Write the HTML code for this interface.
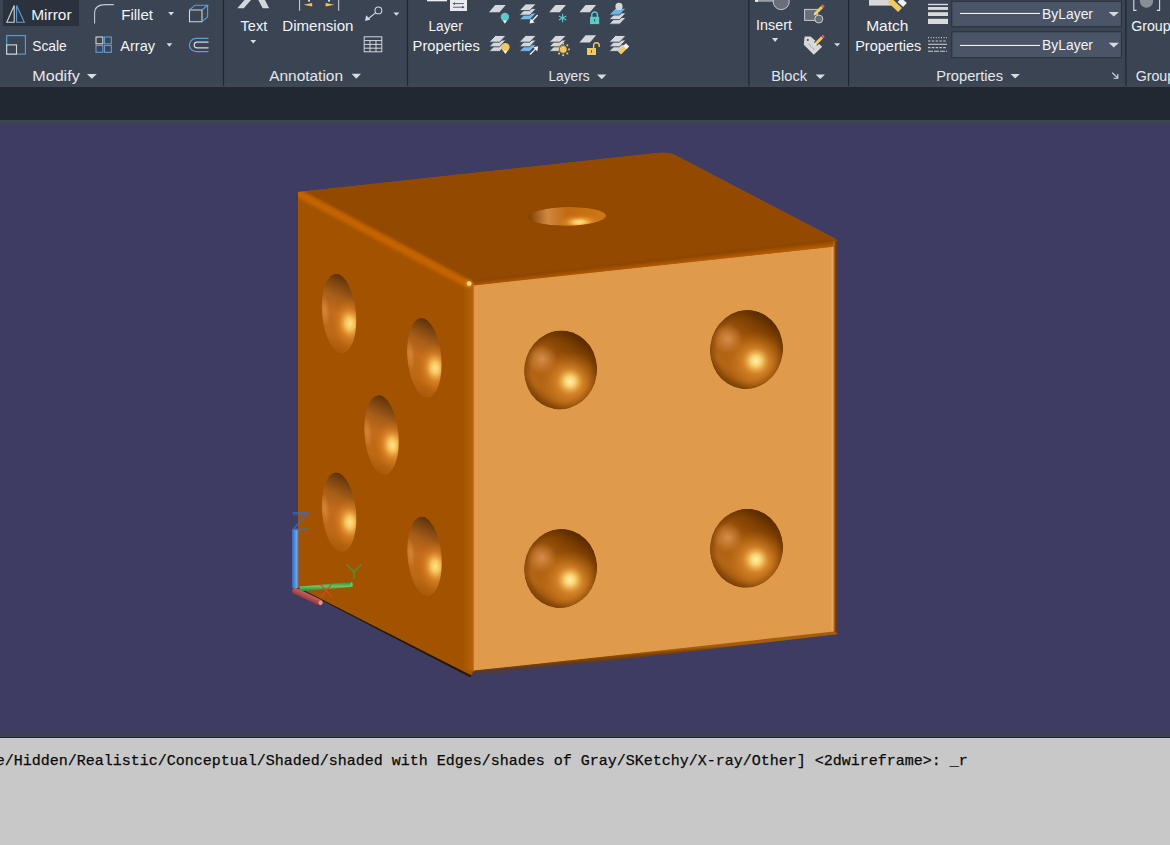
<!DOCTYPE html>
<html><head><meta charset="utf-8">
<style>
html,body{margin:0;padding:0;width:1170px;height:845px;overflow:hidden;background:#3e3c62;}
body{position:relative;font-family:"Liberation Sans",sans-serif;}
.band{position:absolute;left:0;width:1170px;}
svg{position:absolute;left:0;top:0;}
</style></head>
<body>
<div class="band" style="top:0;height:87px;background:#3b4453"></div>
<div class="band" style="top:83px;height:4px;background:#3f4755"></div>
<div class="band" style="top:87px;height:33px;background:#222831"></div>
<div class="band" style="top:120px;height:6px;background:linear-gradient(#3d4550,#3d4550 40%,#3e3c62)"></div>
<div class="band" style="top:733px;height:4px;background:#3c4050"></div>
<div class="band" style="top:737px;height:1px;background:#20242c"></div>
<div class="band" style="top:738px;height:107px;background:#c8c8c8"></div>
<div style="position:absolute;left:-4.3px;top:752px;font-family:'Liberation Mono',monospace;font-size:15px;line-height:20px;color:#0a0a0a;white-space:pre;-webkit-text-stroke:0.25px #0a0a0a;">e/Hidden/Realistic/Conceptual/Shaded/shaded with Edges/shades of Gray/SKetchy/X-ray/Other] &lt;2dwireframe&gt;: _r</div>
<svg width="1170" height="845" viewBox="0 0 1170 845">

<defs>
  <clipPath id="clipHole"><ellipse rx="17" ry="40"/></clipPath>
  <clipPath id="clipSph"><ellipse rx="36.5" ry="39.6"/></clipPath>
  <linearGradient id="hole" x1="0.62" y1="0" x2="0.38" y2="1">
    <stop offset="0" stop-color="#5a2e08"/>
    <stop offset="0.1" stop-color="#74400e"/>
    <stop offset="0.3" stop-color="#a85e18"/>
    <stop offset="0.5" stop-color="#c26c1c"/>
    <stop offset="0.8" stop-color="#bc6814"/>
    <stop offset="1" stop-color="#a65808"/>
  </linearGradient>
  <radialGradient id="holeSoft" cx="0.5" cy="0.5" r="0.5">
    <stop offset="0" stop-color="#dc9048" stop-opacity="0.7"/>
    <stop offset="1" stop-color="#dc9048" stop-opacity="0"/>
  </radialGradient>
  <radialGradient id="holeHi" cx="0.5" cy="0.5" r="0.5">
    <stop offset="0" stop-color="#ffe888" stop-opacity="1"/>
    <stop offset="0.25" stop-color="#fcc860" stop-opacity="0.92"/>
    <stop offset="0.6" stop-color="#e89030" stop-opacity="0.45"/>
    <stop offset="1" stop-color="#d07010" stop-opacity="0"/>
  </radialGradient>
  <linearGradient id="topHole" x1="0" y1="0" x2="1" y2="0">
    <stop offset="0" stop-color="#7a3e00"/>
    <stop offset="0.12" stop-color="#a86020"/>
    <stop offset="0.25" stop-color="#d08840"/>
    <stop offset="0.5" stop-color="#c06a10"/>
    <stop offset="1" stop-color="#cc7818"/>
  </linearGradient>
  <linearGradient id="sphBase" x1="0.75" y1="0" x2="0.3" y2="1">
    <stop offset="0" stop-color="#482000"/>
    <stop offset="0.2" stop-color="#7c3e00"/>
    <stop offset="0.5" stop-color="#ac5e10"/>
    <stop offset="0.8" stop-color="#b46616"/>
    <stop offset="1" stop-color="#8a4806"/>
  </linearGradient>
  <radialGradient id="sphEdge" cx="0.5" cy="0.5" r="0.5">
    <stop offset="0.8" stop-color="#603000" stop-opacity="0"/>
    <stop offset="1" stop-color="#603000" stop-opacity="0.5"/>
  </radialGradient>
  <radialGradient id="sphHi" cx="0.5" cy="0.5" r="0.5">
    <stop offset="0" stop-color="#fff4b0" stop-opacity="1"/>
    <stop offset="0.18" stop-color="#fdd472" stop-opacity="0.95"/>
    <stop offset="0.45" stop-color="#eb9835" stop-opacity="0.55"/>
    <stop offset="1" stop-color="#c87010" stop-opacity="0"/>
  </radialGradient>
  <radialGradient id="sphSoft" cx="0.5" cy="0.5" r="0.5">
    <stop offset="0" stop-color="#e6a060" stop-opacity="0.7"/>
    <stop offset="0.5" stop-color="#e6a060" stop-opacity="0.35"/>
    <stop offset="1" stop-color="#e6a060" stop-opacity="0"/>
  </radialGradient>
  <linearGradient id="bevTop" gradientUnits="userSpaceOnUse" x1="650" y1="258.2" x2="650.95" y2="266.6">
    <stop offset="0" stop-color="#934900"/>
    <stop offset="0.35" stop-color="#8e4600"/>
    <stop offset="1" stop-color="#b65d00"/>
  </linearGradient>
  <linearGradient id="bevFront" x1="0" y1="0" x2="1" y2="0">
    <stop offset="0" stop-color="#a35300"/>
    <stop offset="0.2" stop-color="#a85800"/>
    <stop offset="0.85" stop-color="#b46008"/>
    <stop offset="1" stop-color="#c87a30"/>
  </linearGradient>
  <linearGradient id="bevRight" x1="0" y1="0" x2="1" y2="0">
    <stop offset="0" stop-color="#c07030"/>
    <stop offset="0.4" stop-color="#7a4010"/>
    <stop offset="0.7" stop-color="#5a3a28"/>
    <stop offset="1" stop-color="#3e3c62"/>
  </linearGradient>
  <linearGradient id="bevBot" gradientUnits="userSpaceOnUse" x1="650" y1="651.6" x2="650.5" y2="657.6">
    <stop offset="0" stop-color="#a65c0c"/>
    <stop offset="0.35" stop-color="#864600"/>
    <stop offset="0.75" stop-color="#6a3c18"/>
    <stop offset="1" stop-color="#4a3a48"/>
  </linearGradient>
  <filter id="blur05" x="-20%" y="-20%" width="140%" height="140%"><feGaussianBlur stdDeviation="0.5"/></filter>
  <filter id="blur07" x="-20%" y="-20%" width="140%" height="140%"><feGaussianBlur stdDeviation="0.7"/></filter>
  <filter id="blur18" x="-20%" y="-20%" width="140%" height="140%"><feGaussianBlur stdDeviation="1.8"/></filter>
  <filter id="blur2" x="-20%" y="-20%" width="140%" height="140%"><feGaussianBlur stdDeviation="2"/></filter>
  <filter id="blur1" x="-50%" y="-50%" width="200%" height="200%"><feGaussianBlur stdDeviation="1"/></filter>
  <clipPath id="clipDie"><path d="M298,192 L655,153.2 Q664,151.8 673,154 L835,238.6 Q838.5,240 838.5,243 L838.5,634 L470,677.5 L298,588 Z"/></clipPath>
  <clipPath id="clipTopHole"><ellipse rx="39" ry="9.4"/></clipPath>
  <clipPath id="clipLeft"><polygon points="298,192 470,284 470,675 298,587"/></clipPath>
</defs>


<!-- die faces -->
<path d="M298,192 L655,153.2 Q664,151.8 673,154 L835,238.6 Q837.5,240 837.5,243 L837.5,634 L470,675.5 L298,587.5 Z" fill="#a35300"/>
<polygon points="298,192 470,284 470,675 298,587" fill="#a35300"/>
<path d="M298,192 L655,153.2 Q664,151.8 673,154 L835,238.6 Q837.5,240 837.5,243 L474,285 L470,284 Z" fill="#934900"/>
<polygon points="474,285 833,246.6 833.5,246.6 833.5,632.5 474,671" fill="#e09a4b"/>
<g clip-path="url(#clipDie)">
  <polygon points="463,284 474,285 474,671 463,670" fill="url(#bevFront)"/>
  <line x1="296" y1="192" x2="470" y2="285" stroke="#c46400" stroke-width="8" filter="url(#blur18)"/>
  <path d="M468,279.2 L833,237 Q836.5,238.5 837.5,242 L837.5,249 L833.5,246.8 L474,285.5 L468,284 Z" fill="url(#bevTop)"/>
  <rect x="831.4" y="246.8" width="2.3" height="386" fill="#e8a558"/>
  <rect x="833.6" y="241" width="5" height="395" fill="url(#bevRight)"/>
  <polygon points="474,670.6 834,631.6 838.5,634 838.5,637.5 470,677" fill="url(#bevBot)" filter="url(#blur05)"/>
  <line x1="297" y1="588" x2="471" y2="676.5" stroke="#2a1808" stroke-width="2.2" filter="url(#blur05)"/>
  <line x1="298" y1="584.5" x2="470" y2="673" stroke="#9a5608" stroke-width="2" filter="url(#blur07)"/>
</g>
<circle cx="469.2" cy="283.6" r="3.8" fill="#e89030" opacity="0.6" filter="url(#blur1)"/><circle cx="469.2" cy="283.6" r="2.4" fill="#ffd678" filter="url(#blur07)"/>
<g transform="translate(567.2,216.4) rotate(-1)" clip-path="url(#clipTopHole)">
  <ellipse rx="39" ry="9.4" fill="url(#topHole)"/>
  <ellipse cx="12" cy="6" rx="24" ry="9" fill="url(#holeHi)"/>
</g>
<g transform="translate(339,313.6) rotate(-5)" clip-path="url(#clipHole)">
  <ellipse rx="17" ry="40" fill="url(#hole)"/>
  <ellipse cx="-14" cy="-4" rx="5" ry="16" fill="url(#holeSoft)"/>
  <ellipse cx="10" cy="11" rx="18" ry="25" fill="url(#holeHi)"/>
</g><g transform="translate(424.3,357.8) rotate(-5)" clip-path="url(#clipHole)">
  <ellipse rx="17" ry="40" fill="url(#hole)"/>
  <ellipse cx="-14" cy="-4" rx="5" ry="16" fill="url(#holeSoft)"/>
  <ellipse cx="10" cy="11" rx="18" ry="25" fill="url(#holeHi)"/>
</g><g transform="translate(381.5,435) rotate(-5)" clip-path="url(#clipHole)">
  <ellipse rx="17" ry="40" fill="url(#hole)"/>
  <ellipse cx="-14" cy="-4" rx="5" ry="16" fill="url(#holeSoft)"/>
  <ellipse cx="10" cy="11" rx="18" ry="25" fill="url(#holeHi)"/>
</g><g transform="translate(339,512.3) rotate(-5)" clip-path="url(#clipHole)">
  <ellipse rx="17" ry="40" fill="url(#hole)"/>
  <ellipse cx="-14" cy="-4" rx="5" ry="16" fill="url(#holeSoft)"/>
  <ellipse cx="10" cy="11" rx="18" ry="25" fill="url(#holeHi)"/>
</g><g transform="translate(424.5,556.3) rotate(-5)" clip-path="url(#clipHole)">
  <ellipse rx="17" ry="40" fill="url(#hole)"/>
  <ellipse cx="-14" cy="-4" rx="5" ry="16" fill="url(#holeSoft)"/>
  <ellipse cx="10" cy="11" rx="18" ry="25" fill="url(#holeHi)"/>
</g>
<g transform="translate(560.6,370) rotate(8)" clip-path="url(#clipSph)">
  <ellipse rx="36.5" ry="39.6" fill="url(#sphBase)"/>
  <ellipse rx="36.5" ry="39.6" fill="url(#sphEdge)"/>
  <ellipse cx="-20" cy="-8" rx="15" ry="15" fill="url(#sphSoft)"/>
  <ellipse cx="11" cy="10" rx="30" ry="30" fill="url(#sphHi)"/>
</g><g transform="translate(746.5,349.5) rotate(8)" clip-path="url(#clipSph)">
  <ellipse rx="36.5" ry="39.6" fill="url(#sphBase)"/>
  <ellipse rx="36.5" ry="39.6" fill="url(#sphEdge)"/>
  <ellipse cx="-20" cy="-8" rx="15" ry="15" fill="url(#sphSoft)"/>
  <ellipse cx="11" cy="10" rx="30" ry="30" fill="url(#sphHi)"/>
</g><g transform="translate(560.6,568.5) rotate(8)" clip-path="url(#clipSph)">
  <ellipse rx="36.5" ry="39.6" fill="url(#sphBase)"/>
  <ellipse rx="36.5" ry="39.6" fill="url(#sphEdge)"/>
  <ellipse cx="-20" cy="-8" rx="15" ry="15" fill="url(#sphSoft)"/>
  <ellipse cx="11" cy="10" rx="30" ry="30" fill="url(#sphHi)"/>
</g><g transform="translate(746.5,548.3) rotate(8)" clip-path="url(#clipSph)">
  <ellipse rx="36.5" ry="39.6" fill="url(#sphBase)"/>
  <ellipse rx="36.5" ry="39.6" fill="url(#sphEdge)"/>
  <ellipse cx="-20" cy="-8" rx="15" ry="15" fill="url(#sphSoft)"/>
  <ellipse cx="11" cy="10" rx="30" ry="30" fill="url(#sphHi)"/>
</g>


<defs>
<linearGradient id="zax" x1="0" y1="0" x2="1" y2="0"><stop offset="0" stop-color="#3566b8"/><stop offset="0.7" stop-color="#6aa2e6"/><stop offset="1" stop-color="#4a7cc8"/></linearGradient>
<linearGradient id="yax" x1="0" y1="0" x2="0" y2="1"><stop offset="0" stop-color="#2e8a2e"/><stop offset="0.45" stop-color="#6cc464"/><stop offset="1" stop-color="#2a7a2a"/></linearGradient>
<linearGradient id="xax" x1="0" y1="0" x2="0" y2="1"><stop offset="0" stop-color="#c86060"/><stop offset="1" stop-color="#9a3a3a"/></linearGradient>
</defs>
<g fill="none" stroke="#3a6cc8" stroke-width="1.4" opacity="0.9"><path d="M292.6,513 H307.6 L293.2,529.2 H307.8"/><path d="M293,515 H305" opacity="0.5"/></g>
<rect x="292" y="530" width="6.4" height="58" fill="url(#zax)"/>
<polygon points="299.5,586.6 351.5,582 351.7,587 299.6,591.6" fill="url(#yax)"/>
<ellipse cx="351.6" cy="584.5" rx="1.2" ry="2.5" fill="#6cc464"/>
<g transform="translate(292.5,589.7) rotate(25)"><rect x="0" y="-3" width="33" height="6" rx="3" fill="url(#xax)"/><ellipse cx="31" cy="0" rx="2" ry="2.2" fill="#e89090"/></g>
<g fill="none" stroke="#3c9c3c" stroke-width="1.3"><path d="M346.6,564.4 L354,572 L361.6,564.4 M354,572 V579"/></g>
<g fill="none" stroke="#d04a28" stroke-width="1.1"><path d="M320.4,584.4 L332,597.2 M331.6,584.4 L320.6,597.2"/></g>

<g font-family="Liberation Sans, sans-serif"><rect x="3" y="0" width="76" height="26" fill="#2b323d"/>
<polygon points="6.8,22.2 14.2,5.5 14.2,22.2" fill="none" stroke="#d4d7db" stroke-width="1.1"/>
<polygon points="16.6,5.5 16.6,22.2 24.3,22.2" fill="none" stroke="#5c9fd6" stroke-width="1.1"/>
<text x="31.2" y="20" font-size="15" fill="#f2f4f6" textLength="40.4" lengthAdjust="spacingAndGlyphs">Mirror</text>
<rect x="6.7" y="35.6" width="18.7" height="18.5" fill="none" stroke="#5c9fd6" stroke-width="1.1"/>
<rect x="6.7" y="44.9" width="9.8" height="9.2" fill="#3b4453" stroke="#d4d7db" stroke-width="1.1"/>
<text x="32.2" y="50.7" font-size="15" fill="#f2f4f6" textLength="34.6" lengthAdjust="spacingAndGlyphs">Scale</text>
<path d="M94.6,23.6 V13 Q94.6,4.6 105.5,4.6 H113.8" fill="none" stroke="#c0cad4" stroke-width="1.1"/>
<text x="121.2" y="20" font-size="15" fill="#f2f4f6" textLength="31.8" lengthAdjust="spacingAndGlyphs">Fillet</text>
<polygon points="168.2,12 174,12 171.1,15.6" fill="#d8dbe0"/>
<path d="M189.5,10 H202 V21.7 H189.5 Z" fill="none" stroke="#d4d7db" stroke-width="1.1"/>
<path d="M189.5,10 L195,5.2 H207.6 L202,10 M207.6,5.2 V17 L202,21.7" fill="none" stroke="#5c9fd6" stroke-width="1.1"/>
<rect x="96" y="37" width="6.8" height="6.8" fill="none" stroke="#d4d7db" stroke-width="1.1"/>
<rect x="104.5" y="37" width="6.8" height="6.8" fill="none" stroke="#5c9fd6" stroke-width="1.1"/>
<rect x="96" y="45.5" width="6.8" height="6.8" fill="none" stroke="#5c9fd6" stroke-width="1.1"/>
<rect x="104.5" y="45.5" width="6.8" height="6.8" fill="none" stroke="#5c9fd6" stroke-width="1.1"/>
<text x="120.3" y="51.1" font-size="15" fill="#f2f4f6" textLength="34.8" lengthAdjust="spacingAndGlyphs">Array</text>
<polygon points="166.6,43.3 172.3,43.3 169.45,46.8" fill="#d8dbe0"/>
<path d="M208.5,38.4 H196 A6.6,6.6 0 0 0 196,51.6 H208.5" fill="none" stroke="#5c9fd6" stroke-width="1.2"/>
<path d="M208.5,42.2 H197 A2.8,2.8 0 0 0 197,47.8 H208.5" fill="none" stroke="#d4d7db" stroke-width="1.2"/>
<text x="32.2" y="80.8" font-size="15" fill="#e3e7eb" textLength="47.6" lengthAdjust="spacingAndGlyphs">Modify</text>
<polygon points="86.9,74 96.8,74 91.85,78.8" fill="#d8dbe0"/>
<rect x="222.9" y="0" width="1.2" height="86" fill="#1f2630"/>
<polygon points="237.3,8.2 243.8,8.2 251,0 244.5,0" fill="#d4d7db"/><polygon points="262.7,8.2 269.2,8.2 264.9,0 258.3,0" fill="#d4d7db"/>
<text x="240.6" y="31.3" font-size="15" fill="#f2f4f6" textLength="26.6" lengthAdjust="spacingAndGlyphs">Text</text>
<polygon points="250.3,40 256.2,40 253.25,43.6" fill="#d8dbe0"/>
<path d="M299.6,0 V10.8 M338.7,0 V10.8" stroke="#d4d7db" stroke-width="1"/>
<polygon points="303.4,4.8 312.2,3 312.2,6.6" fill="#f0c060"/>
<polygon points="334.4,4.8 325.6,3 325.6,6.6" fill="#f0c060"/>
<rect x="308" y="0" width="2" height="1.5" fill="#d4d7db"/><rect x="328" y="0" width="2" height="1.5" fill="#d4d7db"/>
<text x="282.3" y="31" font-size="15" fill="#f2f4f6" textLength="71.2" lengthAdjust="spacingAndGlyphs">Dimension</text>
<circle cx="378.4" cy="10.4" r="3.4" fill="none" stroke="#d4d7db" stroke-width="1.1"/>
<path d="M375.8,12.6 L368,19" stroke="#d4d7db" stroke-width="1.1"/>
<polygon points="365,21 366.2,15.2 370.4,19.6" fill="#d4d7db"/>
<polygon points="393.4,12.4 399.4,12.4 396.4,15.8" fill="#d8dbe0"/>
<g fill="none" stroke="#d4d7db" stroke-width="1"><rect x="364.2" y="36.8" width="17.6" height="15"/><path d="M364.2,40.6 H381.8 M364.2,44.4 H381.8 M364.2,48.2 H381.8 M370,40.6 V51.8 M376,40.6 V51.8"/></g>
<text x="269.2" y="80.7" font-size="15" fill="#e3e7eb" textLength="73.8" lengthAdjust="spacingAndGlyphs">Annotation</text>
<polygon points="351.6,73.8 361,73.8 356.3,78.8" fill="#d8dbe0"/>
<rect x="406.9" y="0" width="1.2" height="86" fill="#1f2630"/>
<rect x="427" y="0" width="20" height="1.3" fill="#eef0f2"/>
<rect x="450" y="0" width="17" height="11" fill="#e8eaee"/>
<path d="M453,3.6 H464 M453,7.2 H464" stroke="#4a5060" stroke-width="0.9"/>
<polygon points="452.5,3.6 455,2.2 455,5" fill="#4a5060"/><polygon points="464.5,7.2 462,5.8 462,8.6" fill="#4a5060"/>
<text x="428.5" y="31.2" font-size="15" fill="#f2f4f6" textLength="34.2" lengthAdjust="spacingAndGlyphs">Layer</text>
<text x="412.6" y="50.7" font-size="15" fill="#f2f4f6" textLength="67.2" lengthAdjust="spacingAndGlyphs">Properties</text>
<polygon points="489,12.2 495.2,4.8999999999999995 505.7,4.8999999999999995 499.5,12.2" fill="#d4d7db"/>
<circle cx="504.9" cy="17" r="4.2" fill="#5ccaca"/><path d="M502.6,20.6 H507.2 L504.9,23.8 Z" fill="#f2f2f2"/>
<polygon points="519.2,19.8 525.6,13.100000000000001 536.2,13.100000000000001 529.8000000000001,19.8" fill="#74b8ee" stroke="#3b4453" stroke-width="0.9"/><polygon points="519.2,15.200000000000001 525.6,8.5 536.2,8.5 529.8000000000001,15.200000000000001" fill="#d4d7db" stroke="#3b4453" stroke-width="0.9"/><polygon points="519.2,10.600000000000001 525.6,3.9000000000000012 536.2,3.9000000000000012 529.8000000000001,10.600000000000001" fill="#d4d7db" stroke="#3b4453" stroke-width="0.9"/>
<path d="M537.6,15 L531.5,21.5" stroke="#f2f2f2" stroke-width="1.3"/><polygon points="529.6,23.6 530.6,18.4 534.6,22.6" fill="#f2f2f2"/>
<polygon points="549.2,12.2 555.4000000000001,4.8999999999999995 565.9000000000001,4.8999999999999995 559.7,12.2" fill="#d4d7db"/>
<g stroke="#5ccaca" stroke-width="1.1"><path d="M562.6,13.8 V22.2 M558.9,15.9 L566.3,20.1 M558.9,20.1 L566.3,15.9"/></g>
<polygon points="579.4,12.2 585.6,4.8999999999999995 596.1,4.8999999999999995 589.9,12.2" fill="#d4d7db"/>
<path d="M591.8,17 V14.8 A2.8,2.8 0 0 1 597.4,14.8 V17" fill="none" stroke="#5ccaca" stroke-width="1.4"/><rect x="590" y="16.8" width="9.2" height="7.3" fill="#5ccaca"/><rect x="594.2" y="19" width="0.9" height="2.5" fill="#3b4453"/>
<polygon points="609,24.2 615.4,17.5 626,17.5 619.6,24.2" fill="#d4d7db" stroke="#3b4453" stroke-width="0.9"/><polygon points="609,19.6 615.4,12.900000000000002 626,12.900000000000002 619.6,19.6" fill="#d4d7db" stroke="#3b4453" stroke-width="0.9"/><polygon points="609,15.0 615.4,8.3 626,8.3 619.6,15.0" fill="#6ab4e6" stroke="#3b4453" stroke-width="0.9"/>
<circle cx="619" cy="6.4" r="3.6" fill="#d4d7db"/>
<polygon points="489,51.4 495.4,44.699999999999996 506,44.699999999999996 499.6,51.4" fill="#d4d7db" stroke="#3b4453" stroke-width="0.9"/><polygon points="489,46.8 495.4,40.099999999999994 506,40.099999999999994 499.6,46.8" fill="#d4d7db" stroke="#3b4453" stroke-width="0.9"/><polygon points="489,42.2 495.4,35.5 506,35.5 499.6,42.2" fill="#d4d7db" stroke="#3b4453" stroke-width="0.9"/>
<circle cx="505.4" cy="47.2" r="4.2" fill="#f2c862"/><path d="M503.1,50.8 H507.7 L505.4,54 Z" fill="#f2f2f2"/>
<polygon points="519.2,51.4 525.6,44.699999999999996 536.2,44.699999999999996 529.8000000000001,51.4" fill="#74b8ee" stroke="#3b4453" stroke-width="0.9"/><polygon points="519.2,46.8 525.6,40.099999999999994 536.2,40.099999999999994 529.8000000000001,46.8" fill="#d4d7db" stroke="#3b4453" stroke-width="0.9"/><polygon points="519.2,42.2 525.6,35.5 536.2,35.5 529.8000000000001,42.2" fill="#d4d7db" stroke="#3b4453" stroke-width="0.9"/>
<path d="M530,54.5 L536,48.4" stroke="#f2f2f2" stroke-width="1.3"/><polygon points="538.2,46.2 537.2,51.4 533.2,47.2" fill="#f2f2f2"/>
<polygon points="549.2,51.4 555.6,44.699999999999996 566.2,44.699999999999996 559.8000000000001,51.4" fill="#d4d7db" stroke="#3b4453" stroke-width="0.9"/><polygon points="549.2,46.8 555.6,40.099999999999994 566.2,40.099999999999994 559.8000000000001,46.8" fill="#d4d7db" stroke="#3b4453" stroke-width="0.9"/><polygon points="549.2,42.2 555.6,35.5 566.2,35.5 559.8000000000001,42.2" fill="#d4d7db" stroke="#3b4453" stroke-width="0.9"/>
<circle cx="563.2" cy="49.4" r="4" fill="#f2c862" stroke="#3b4453" stroke-width="0.8"/>
<g fill="#f2c862"><rect x="568.1" y="48.5" width="1.8" height="1.8"/><rect x="566.4012200010108" y="52.60121866075315" width="1.8" height="1.8"/><rect x="562.3000018954104" y="54.29999999999969" width="1.8" height="1.8"/><rect x="558.1987826795049" y="52.6012213412678" width="1.8" height="1.8"/><rect x="556.5000000000013" y="48.5000037908208" width="1.8" height="1.8"/><rect x="558.1987773184755" y="44.39878401976326" width="1.8" height="1.8"/><rect x="562.2999943137688" y="42.70000000000279" width="1.8" height="1.8"/><rect x="566.401214639978" y="44.39877597821929" width="1.8" height="1.8"/></g>
<polygon points="579.4,42.6 585.6,35.300000000000004 596.1,35.300000000000004 589.9,42.6" fill="#d4d7db"/>
<path d="M593.6,48 V45.6 A2.8,2.8 0 0 1 599.2,45.6 V47" fill="none" stroke="#f2c862" stroke-width="1.4"/><rect x="587" y="48" width="9" height="7" fill="#f2c862"/><rect x="591" y="50.2" width="0.9" height="2.5" fill="#3b4453"/>
<polygon points="609,51.4 615.4,44.699999999999996 626,44.699999999999996 619.6,51.4" fill="#d4d7db" stroke="#3b4453" stroke-width="0.9"/><polygon points="609,46.8 615.4,40.099999999999994 626,40.099999999999994 619.6,46.8" fill="#d4d7db" stroke="#3b4453" stroke-width="0.9"/><polygon points="609,42.2 615.4,35.5 626,35.5 619.6,42.2" fill="#d4d7db" stroke="#3b4453" stroke-width="0.9"/>
<path d="M619.5,53 L626.5,46" stroke="#f2c862" stroke-width="4.5"/><path d="M624.8,47.6 L627.6,44.8" stroke="#f2f2f2" stroke-width="4.5"/>
<text x="548.4" y="80.5" font-size="15" fill="#e3e7eb" textLength="41.2" lengthAdjust="spacingAndGlyphs">Layers</text>
<polygon points="597,74.6 606.4,74.6 601.7,79.2" fill="#d8dbe0"/>
<rect x="748.3" y="0" width="1.2" height="86" fill="#1f2630"/>
<rect x="755" y="0" width="24" height="1.8" fill="#9a9ea6"/><rect x="755" y="0" width="3" height="1.8" fill="#eeeeee"/>
<circle cx="781.2" cy="1.6" r="8" fill="#6a6e78" stroke="#c8cbd0" stroke-width="1"/>
<text x="756.1" y="29.9" font-size="15" fill="#f2f4f6" textLength="35.8" lengthAdjust="spacingAndGlyphs">Insert</text>
<polygon points="772,38 778.2,38 775.1,41.9" fill="#d8dbe0"/>
<rect x="804.6" y="9.4" width="13" height="11" fill="#6a6e78" stroke="#c8cbd0" stroke-width="1"/>
<circle cx="818.8" cy="19" r="4" fill="#6a6e78" stroke="#c8cbd0" stroke-width="1"/>
<path d="M815.5,13.5 L822,7" stroke="#f2c862" stroke-width="3"/><path d="M822,7 L823.8,5.2" stroke="#e06060" stroke-width="3"/><polygon points="813.6,15.4 814.8,12.2 816.8,14.2" fill="#e8e8e8"/>
<polygon points="804.6,36.6 810.6,36.6 822.2,46.8 813.8,54.8 803.8,44.8" fill="#d8d8d8"/>
<circle cx="807.8" cy="40" r="1" fill="#3b4453"/><path d="M808.6,44 L814.6,50" stroke="#5a5e66" stroke-width="0.8" stroke-dasharray="1,1"/>
<path d="M815.5,44 L822,37.5" stroke="#3b4453" stroke-width="4.6"/><path d="M815.5,44 L822,37.5" stroke="#f2c862" stroke-width="3"/><path d="M822,37.5 L823.8,35.7" stroke="#e06060" stroke-width="3"/><polygon points="813.6,45.9 814.8,42.7 816.8,44.7" fill="#e8e8e8"/>
<polygon points="834.2,43.2 840.2,43.2 837.2,46.6" fill="#d8dbe0"/>
<text x="771.3" y="80.6" font-size="15" fill="#e3e7eb" textLength="35.7" lengthAdjust="spacingAndGlyphs">Block</text>
<polygon points="815.6,74.4 825,74.4 820.3,79" fill="#d8dbe0"/>
<rect x="848" y="0" width="1.2" height="86" fill="#1f2630"/>
<rect x="869" y="0" width="23" height="5.6" fill="#d8d8d8"/>
<path d="M889.5,0 L900,10" stroke="#f2c862" stroke-width="5.5"/><path d="M899.5,0 L905,5" stroke="#f0f0f0" stroke-width="5.5"/>
<text x="866.2" y="31" font-size="15" fill="#f2f4f6" textLength="42.2" lengthAdjust="spacingAndGlyphs">Match</text>
<text x="855.2" y="50.8" font-size="15" fill="#f2f4f6" textLength="66.2" lengthAdjust="spacingAndGlyphs">Properties</text>
<g fill="#d8dadc"><rect x="928" y="3.8" width="20" height="1.4"/><rect x="928" y="7" width="20" height="2.9"/><rect x="928" y="12.2" width="20" height="3.8"/><rect x="928" y="18.8" width="20" height="5.2"/></g>
<g stroke="#c8cacc" stroke-width="1.1"><path d="M928,37.6 H947" stroke-dasharray="1,1.6"/><path d="M928,41 H947" stroke-dasharray="2.5,1.3"/><path d="M928,44.3 H947"/><path d="M928,47.6 H947" stroke-dasharray="2.5,1.3"/><path d="M928,51.3 H947" stroke-dasharray="5,1"/></g>
<rect x="951.8" y="1.3" width="169.6" height="25.4" fill="#4b5568" stroke="#2a303a" stroke-width="1"/>
<rect x="960" y="12.9" width="80" height="1.1" fill="#f0f0f0"/>
<text x="1042.1" y="19.0" font-size="15" fill="#f2f4f6" textLength="50.9" lengthAdjust="spacingAndGlyphs">ByLayer</text>
<polygon points="1108.7,11.9 1118.9,11.9 1113.8000000000002,16.6" fill="#d8dbe0"/>
<rect x="951.8" y="31.8" width="169.6" height="25.900000000000002" fill="#4b5568" stroke="#2a303a" stroke-width="1"/>
<rect x="960" y="44.9" width="80" height="1.1" fill="#f0f0f0"/>
<text x="1042.1" y="49.800000000000004" font-size="15" fill="#f2f4f6" textLength="50.9" lengthAdjust="spacingAndGlyphs">ByLayer</text>
<polygon points="1108.7,42.7 1118.9,42.7 1113.8000000000002,47.400000000000006" fill="#d8dbe0"/>
<text x="936.2" y="81" font-size="15" fill="#e3e7eb" textLength="66.9" lengthAdjust="spacingAndGlyphs">Properties</text>
<polygon points="1010.6,74 1019.8,74 1015.2,78.6" fill="#d8dbe0"/>
<path d="M1112.2,72.6 L1117.8,78.2 M1117.8,74 V78.2 H1113.6" stroke="#d8dbe0" stroke-width="1.1" fill="none"/>
<rect x="1125.3" y="0" width="1.2" height="86" fill="#1f2630"/>
<path d="M1133.8,0 V10.4 H1136.6 M1159.6,0 V10.4 H1156.8" stroke="#d8dbe0" stroke-width="1.1" fill="none"/>
<ellipse cx="1146.5" cy="1.2" rx="6.6" ry="6.5" fill="#8a8e96"/>
<text x="1131.2" y="30.8" font-size="15" fill="#f2f4f6" textLength="39.5" lengthAdjust="spacingAndGlyphs">Group</text>
<text x="1135.7" y="80.8" font-size="15" fill="#e3e7eb" textLength="39.5" lengthAdjust="spacingAndGlyphs">Group</text></g>
</svg>
</body></html>
